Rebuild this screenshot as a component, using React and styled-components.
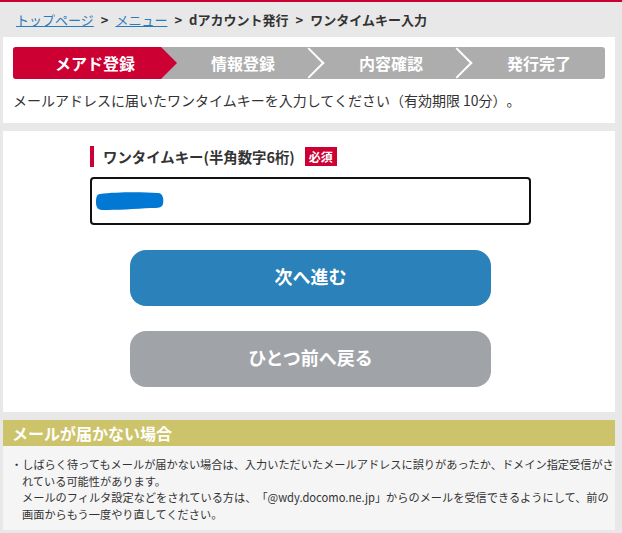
import React from 'react';
import styled, { createGlobalStyle } from 'styled-components';

const GlobalStyle = createGlobalStyle`
  body {
    margin: 0;
    background: #e8e8e8;
    font-family: "Noto Sans CJK JP", "Noto Sans", sans-serif;
    color: #333;
    text-spacing-trim: space-all;
  }
`;

const Page = styled.div`
  border-top: 2px solid #cc0033;
  padding: 0 7px 4px 3px;
`;

const Breadcrumb = styled.nav`
  height: 35px;
  display: flex;
  align-items: center;
  padding-left: 13px;
  font-size: 13px;
  a {
    color: #2b7bb9;
    text-decoration: underline;
  }
  strong {
    color: #333;
    font-weight: 700;
  }
`;

const Sep = styled.span`
  margin: 0 7px;
  font-weight: 700;
  color: #333;
`;

const Panel = styled.section`
  background: #fff;
  padding: ${(p) => p.$pad};
  & + & {
    margin-top: 8px;
  }
`;

const Steps = styled.ol`
  display: flex;
  height: 32px;
  margin: 0 0 11px;
  padding: 0;
  list-style: none;
  background: #adadad;
  border-radius: 3px;
  overflow: hidden;
`;

const Step = styled.li`
  flex: 1;
  position: relative;
  display: flex;
  align-items: center;
  justify-content: center;
  padding-left: 16px;
  color: #fff;
  font-size: 16px;
  font-weight: 700;
  background: ${(p) => (p.$active ? '#cc0033' : 'transparent')};
  &::after {
    content: '';
    position: absolute;
    z-index: 1;
    ${(p) =>
      p.$last
        ? 'display: none;'
        : p.$active
        ? `right: -16px; top: 0; border-left: 16px solid #cc0033;
           border-top: 16px solid transparent; border-bottom: 16px solid transparent;`
        : `right: -11px; top: 5px; width: 20px; height: 20px;
           border-top: 2px solid #fff; border-right: 2px solid #fff;
           transform: rotate(45deg);`}
  }
`;

const Lead = styled.p`
  margin: 0;
  font-size: 14px;
  line-height: 21px;
`;

const Form = styled.div`
  width: 441px;
  margin: 0 auto;
  display: flex;
  flex-direction: column;
  align-items: center;
`;

const Label = styled.div`
  align-self: stretch;
  display: flex;
  align-items: center;
  height: 21px;
  border-left: 4px solid #cc0033;
  padding-left: 9px;
  font-size: 14.4px;
  font-weight: 700;
  color: #333;
`;

const Required = styled.span`
  margin-left: 10px;
  background: #cc0033;
  color: #fff;
  font-size: 12px;
  font-weight: 700;
  padding: 0 4px;
  line-height: 19px;
`;

const Input = styled.div`
  align-self: stretch;
  box-sizing: border-box;
  height: 48px;
  margin-top: 10px;
  border: 2px solid #111;
  border-radius: 4px;
  display: flex;
  align-items: center;
  padding-left: 4px;
`;

const Button = styled.button`
  width: 361px;
  height: 56px;
  margin-top: 25px;
  border: 0;
  border-radius: 16px;
  background: ${(p) => (p.$secondary ? '#a0a4a8' : '#2b81ba')};
  color: #fff;
  font-family: inherit;
  font-size: 18px;
  font-weight: 700;
  line-height: 52px;
  padding: 0 0 4px;
`;

const NoticeHead = styled.h2`
  margin: 8px 0 0;
  background: #ccc36a;
  color: #fff;
  font-size: 16px;
  font-weight: 700;
  line-height: 26px;
  padding-left: 9px;
`;

const NoticeBody = styled.div`
  background: #f5f5f5;
  padding: 10px 0 8px 19px;
  font-size: 11.2px;
  line-height: 16.6px;
  color: #333;
  white-space: nowrap;
  p {
    margin: 0;
  }
`;

const Bullet = styled.span`
  margin-left: -11px;
`;

const steps = ['メアド登録', '情報登録', '内容確認', '発行完了'];

const App = () => {
  return (
    <>
      <GlobalStyle />
      <Page>
        <Breadcrumb>
          <a href="#top">トップページ</a>
          <Sep>&gt;</Sep>
          <a href="#menu">メニュー</a>
          <Sep>&gt;</Sep>
          <strong>dアカウント発行</strong>
          <Sep>&gt;</Sep>
          <strong>ワンタイムキー入力</strong>
        </Breadcrumb>

        <Panel $pad="10px 10px 12px">
          <Steps>
            {steps.map((s, i) => (
              <Step key={s} $active={i === 0} $last={i === steps.length - 1}>
                {s}
              </Step>
            ))}
          </Steps>
          <Lead>メールアドレスに届いたワンタイムキーを入力してください（有効期限 10分）。</Lead>
        </Panel>

        <Panel $pad="15px 0 25px 3px">
          <Form>
            <Label>
              ワンタイムキー(半角数字6桁)
              <Required>必須</Required>
            </Label>
            <Input>
              <svg width="68" height="20" viewBox="0 0 68 20">
                <path
                  d="M4 3 C20 1 45 1 62 2 C67 2 68 8 67 13 C66 17 62 17 55 17 C40 18 20 19 6 19 C1 19 0 15 0 11 C0 6 1 3 4 3 Z"
                  fill="#0078d4"
                />
              </svg>
            </Input>
            <Button>次へ進む</Button>
            <Button $secondary>ひとつ前へ戻る</Button>
          </Form>
        </Panel>

        <NoticeHead>メールが届かない場合</NoticeHead>
        <NoticeBody>
          <p>
            <Bullet>・</Bullet>しばらく待ってもメールが届かない場合は、入力いただいたメールアドレスに誤りがあったか、ドメイン指定受信がさ
            <br />
            れている可能性があります。
          </p>
          <p>
            メールのフィルタ設定などをされている方は、「@wdy.docomo.ne.jp」からのメールを受信できるようにして、前の
            <br />
            画面からもう一度やり直してください。
          </p>
        </NoticeBody>
      </Page>
    </>
  );
};

export default App;
